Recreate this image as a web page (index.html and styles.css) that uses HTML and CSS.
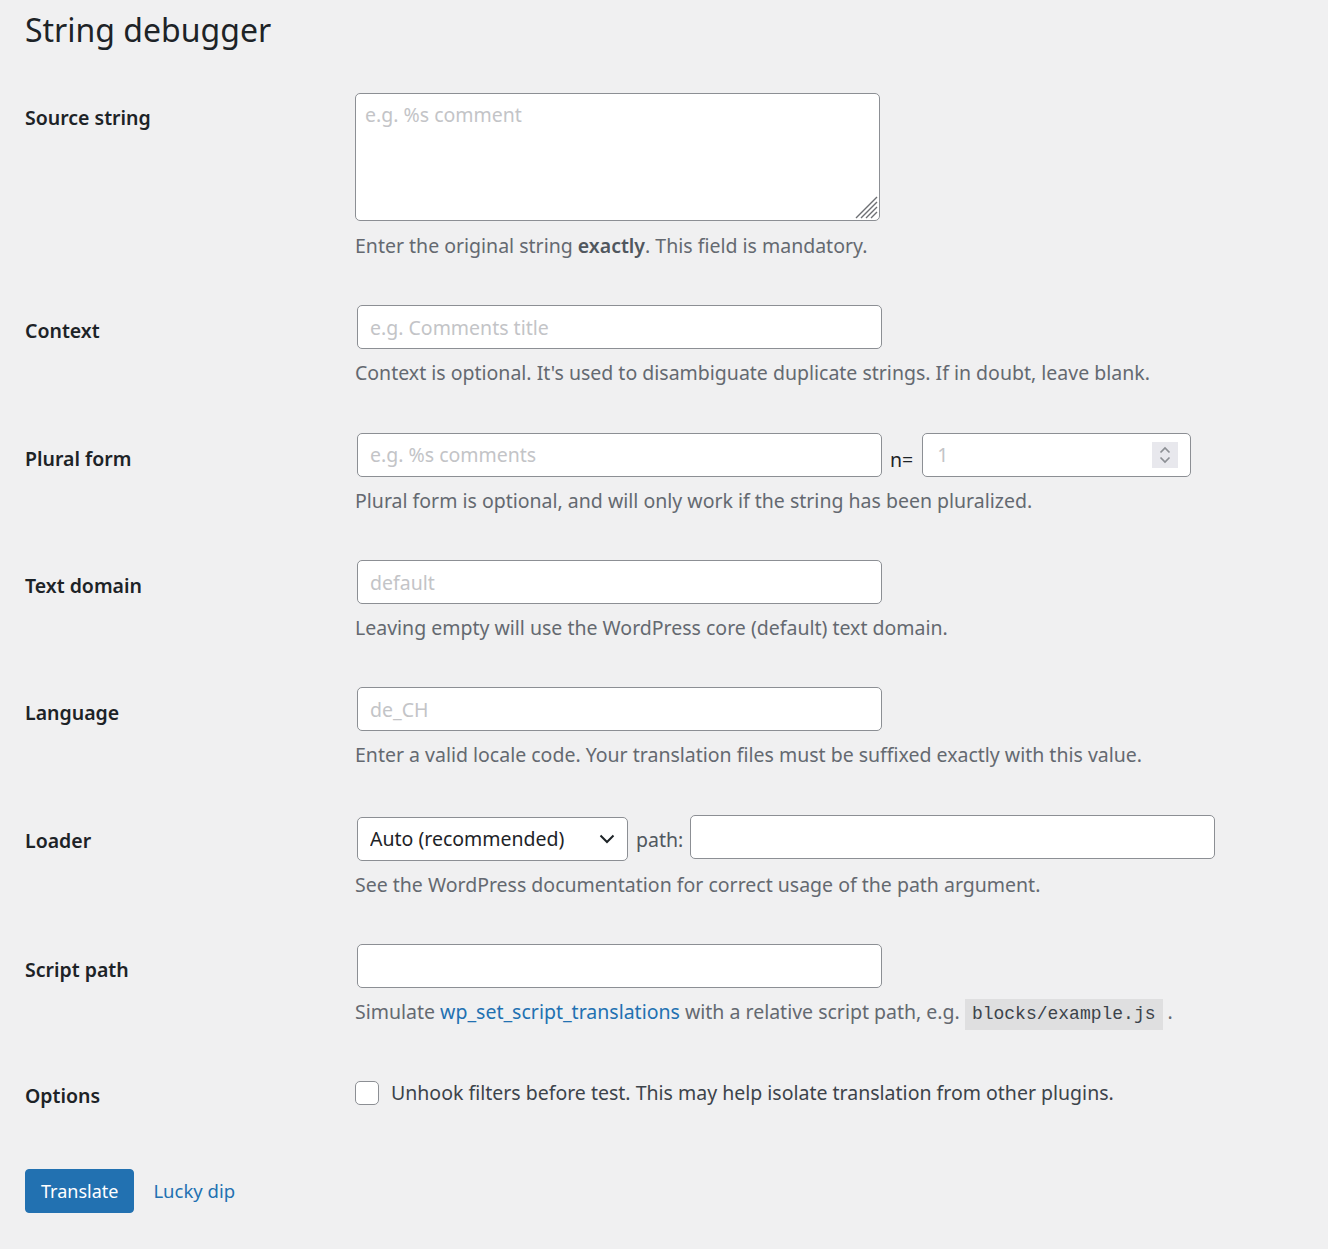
FILE: index.html
```html
<!DOCTYPE html>
<html lang="en">
<head>
<meta charset="utf-8">
<title>String debugger</title>
<link rel="stylesheet" href="styles.css">
</head>
<body>
<div class="wrap">
  <h1 class="title">String debugger</h1>
  <form class="form">
    <div class="row">
      <label class="row-label row-label--tall">Source string</label>
      <div class="row-field">
        <div class="textarea-wrap">
          <textarea class="textarea" placeholder="e.g. %s comment"></textarea>
          <svg class="grip" width="23" height="23" viewBox="0 0 23 23" aria-hidden="true"><path d="M1 22 L22 1 M6 22 L22 6 M11 22 L22 11 M16 22 L22 16" stroke="#6d6f73" stroke-width="1.4" fill="none"/></svg>
        </div>
        <p class="description description--first">Enter the original string <strong>exactly</strong>. This field is mandatory.</p>
      </div>
    </div>
    <div class="row">
      <label class="row-label">Context</label>
      <div class="row-field">
        <input class="text-input" type="text" placeholder="e.g. Comments title">
        <p class="description">Context is optional. It's used to disambiguate duplicate strings. If in doubt, leave blank.</p>
      </div>
    </div>
    <div class="row">
      <label class="row-label">Plural form</label>
      <div class="row-field">
        <div class="inline-fields">
          <input class="text-input" type="text" placeholder="e.g. %s comments">
          <span class="inline-label inline-label--n">n=</span>
          <div class="number-box">
            <input class="number-input" type="text" placeholder="1">
            <span class="spinner">
              <svg width="26" height="26" viewBox="0 0 26 26"><path d="M8.5 10.5 L13 6 L17.5 10.5" fill="none" stroke="#8c8f94" stroke-width="1.7"/><path d="M8.5 15.5 L13 20 L17.5 15.5" fill="none" stroke="#8c8f94" stroke-width="1.7"/></svg>
            </span>
          </div>
        </div>
        <p class="description">Plural form is optional, and will only work if the string has been pluralized.</p>
      </div>
    </div>
    <div class="row">
      <label class="row-label">Text domain</label>
      <div class="row-field">
        <input class="text-input" type="text" placeholder="default">
        <p class="description">Leaving empty will use the WordPress core (default) text domain.</p>
      </div>
    </div>
    <div class="row">
      <label class="row-label">Language</label>
      <div class="row-field">
        <input class="text-input" type="text" placeholder="de_CH">
        <p class="description">Enter a valid locale code. Your translation files must be suffixed exactly with this value.</p>
      </div>
    </div>
    <div class="row">
      <label class="row-label">Loader</label>
      <div class="row-field">
        <div class="inline-fields">
          <select class="select">
            <option>Auto (recommended)</option>
          </select>
          <span class="inline-label inline-label--path">path:</span>
          <input class="text-input text-input--path" type="text">
        </div>
        <p class="description">See the WordPress documentation for correct usage of the path argument.</p>
      </div>
    </div>
    <div class="row">
      <label class="row-label">Script path</label>
      <div class="row-field">
        <input class="text-input" type="text">
        <p class="description">Simulate <a class="link" href="#">wp_set_script_translations</a> with a relative script path, e.g. <code class="code">blocks/example.js</code> .</p>
      </div>
    </div>
    <div class="row row--options">
      <label class="row-label row-label--options">Options</label>
      <div class="row-field">
        <label class="check-line">
          <input class="checkbox" type="checkbox">
          <span>Unhook filters before test. This may help isolate translation from other plugins.</span>
        </label>
      </div>
    </div>
    <div class="actions">
      <button class="button-primary" type="button">Translate</button>
      <a class="link lucky" href="#">Lucky dip</a>
    </div>
  </form>
</div>
</body>
</html>
```

FILE: styles.css
```css
html, body {
  margin: 0;
  padding: 0;
  background: #f0f0f1;
}

body {
  font-family: "Noto Sans", "Open Sans", sans-serif;
  font-size: 19.5px;
  color: #1d2327;
}

.wrap {
  padding: 0 25px;
}

.title {
  margin: 10px 0 0;
  font-size: 32px;
  line-height: 40px;
  font-weight: 400;
  color: #1d2327;
}

.form {
  margin-top: 20px;
}

.row {
  display: grid;
  grid-template-columns: 330px 1fr;
  padding: 22.72px 0;
}

.row-label {
  font-weight: 600;
  line-height: 26px;
  padding-top: 13px;
  color: #1d2327;
}

.row-label--tall {
  padding-top: 12px;
}

.row-label--options {
  padding-top: 11px;
}

.row-field {
  display: flex;
  flex-direction: column;
  align-items: flex-start;
}

.textarea-wrap {
  position: relative;
  display: block;
}

.textarea {
  display: block;
  box-sizing: border-box;
  width: 525px;
  height: 128px;
  margin: 0;
  padding: 8px 9px;
  border: 1px solid #8c8f94;
  border-radius: 5px;
  background: #fff;
  font-family: inherit;
  font-size: 19.5px;
  line-height: 26px;
  color: #1d2327;
  resize: none;
}

.grip {
  position: absolute;
  right: 2px;
  bottom: 2px;
  display: block;
  pointer-events: none;
}

.textarea::placeholder,
.text-input::placeholder,
.number-input::placeholder {
  color: #c3c4c7;
  opacity: 1;
}

.description {
  margin: 10px 0 0;
  line-height: 28px;
  color: #646970;
}

.description--first {
  margin-top: 11px;
}

.description strong {
  font-weight: 600;
  color: #50575e;
}

.text-input {
  box-sizing: border-box;
  width: 525px;
  height: 44px;
  margin: 0 0 0 2px;
  padding: 0 12px;
  border: 1px solid #8c8f94;
  border-radius: 5px;
  background: #fff;
  font-family: inherit;
  font-size: 19.5px;
  color: #1d2327;
}

.text-input--path {
  margin-left: 7px;
}

.inline-fields {
  display: flex;
  align-items: flex-start;
}

.inline-label {
  line-height: 28px;
  color: #1d2327;
}

.inline-label--n {
  align-self: flex-end;
  margin: 0 9px 3px 8px;
}

.inline-label--path {
  margin: 11px 0 0 8px;
  color: #50575e;
}

.number-box {
  box-sizing: border-box;
  width: 269px;
  height: 44px;
  display: flex;
  align-items: center;
  border: 1px solid #8c8f94;
  border-radius: 5px;
  background: #fff;
  padding: 0 12px 0 14px;
}

.number-input {
  flex: 1;
  min-width: 0;
  border: 0;
  padding: 0;
  margin: 0;
  outline: none;
  background: transparent;
  font-family: inherit;
  font-size: 19.5px;
  color: #1d2327;
}

.spinner {
  display: block;
  width: 26px;
  height: 26px;
  background: #e8e8ed;
}

.spinner svg {
  display: block;
}

.select {
  box-sizing: border-box;
  width: 271px;
  height: 44px;
  margin: 2px 0 0 2px;
  padding: 0 36px 0 12px;
  border: 1px solid #8c8f94;
  border-radius: 5px;
  font-family: inherit;
  font-size: 19.5px;
  color: #1d2327;
  -webkit-appearance: none;
  appearance: none;
  background: #fff url("data:image/svg+xml,%3Csvg xmlns='http://www.w3.org/2000/svg' width='16' height='16' viewBox='0 0 16 16'%3E%3Cpath d='M1.5 4.5 L8 11 L14.5 4.5' fill='none' stroke='%231d2327' stroke-width='2'/%3E%3C/svg%3E") no-repeat right 12px center;
}

.link {
  color: #2271b1;
  text-decoration: none;
}

.code {
  font-family: "Liberation Mono", "DejaVu Sans Mono", monospace;
  font-size: 18px;
  line-height: 1;
  padding: 5px 7px 6px;
  background: rgba(0, 0, 0, 0.07);
  color: #3c434a;
}

.check-line {
  display: flex;
  align-items: center;
  height: 42px;
  color: #3c434a;
  line-height: 28px;
}

.checkbox {
  -webkit-appearance: none;
  appearance: none;
  box-sizing: border-box;
  width: 24px;
  height: 24px;
  margin: 0 12px 0 0;
  border: 1px solid #8c8f94;
  border-radius: 5px;
  background: #fff;
}

.actions {
  display: flex;
  align-items: center;
  gap: 19px;
  margin-top: 32px;
  padding-bottom: 36px;
}

.button-primary {
  box-sizing: border-box;
  height: 44px;
  padding: 0 15px;
  border: 1px solid #2271b1;
  border-radius: 4px;
  background: #2271b1;
  color: #fff;
  font-family: inherit;
  font-size: 18px;
  cursor: pointer;
}

.lucky {
  font-size: 18.5px;
}
```
